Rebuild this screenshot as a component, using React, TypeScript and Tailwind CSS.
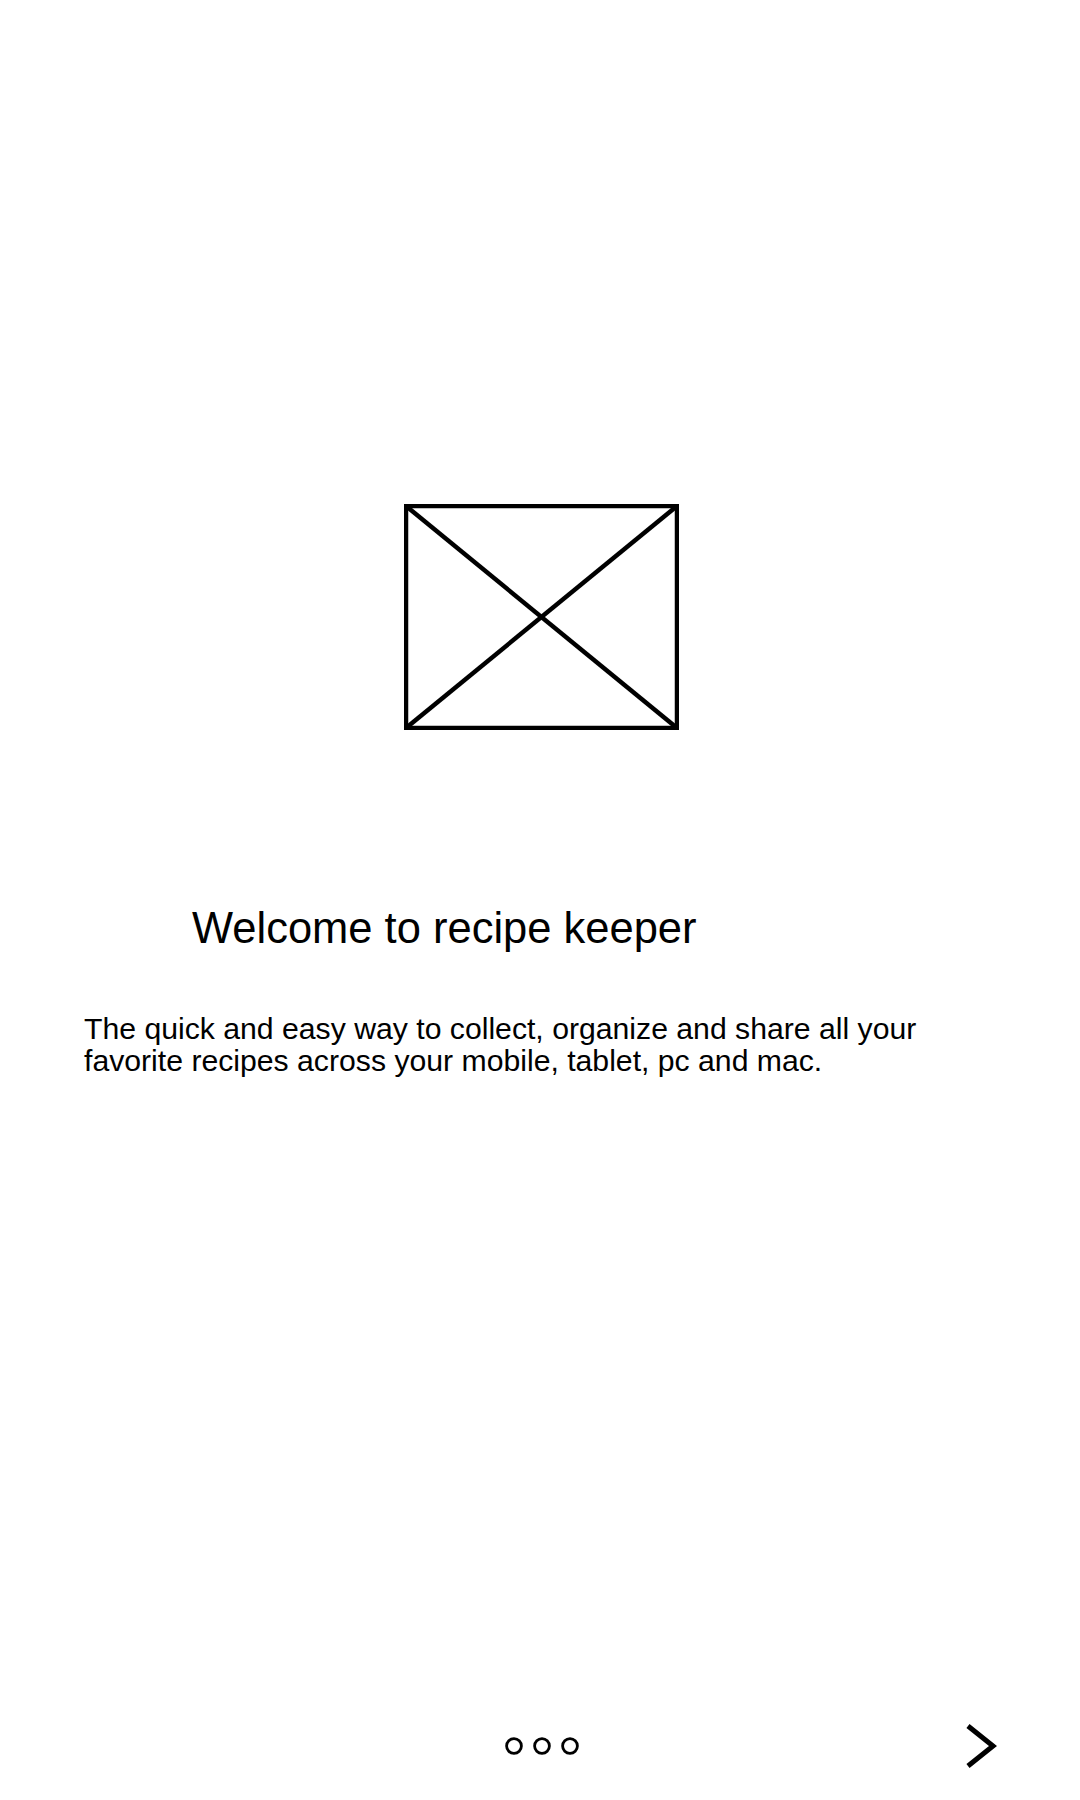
import React from 'react';

function Placeholder() {
  return (
    <svg width="275" height="226" viewBox="0 0 275 226" className="block">
      <rect x="2" y="2" width="271" height="222" fill="none" stroke="black" strokeWidth="4.5" />
      <line x1="2" y1="2" x2="273" y2="224" stroke="black" strokeWidth="4.5" />
      <line x1="273" y1="2" x2="2" y2="224" stroke="black" strokeWidth="4.5" />
    </svg>
  );
}

function Dot() {
  return (
    <svg width="18" height="18" viewBox="0 0 18 18" className="block">
      <circle cx="9" cy="9" r="7.4" fill="none" stroke="black" strokeWidth="2.8" />
    </svg>
  );
}

export default function App() {
  return (
    <div className="w-[1080px] h-[1800px] bg-white text-black flex flex-col font-['Liberation_Sans',Arial,sans-serif]">
      <div className="pt-[504px] flex justify-center pl-[3px]">
        <Placeholder />
      </div>

      <h1 className="mt-[177px] pl-[192px] text-[43.5px] leading-[43px] font-normal">
        Welcome to recipe keeper
      </h1>

      <p className="mt-[63px] pl-[84px] pr-[100px] text-[30.2px] leading-[32px]">
        The quick and easy way to collect, organize and share all your
        <br />
        favorite recipes across your mobile, tablet, pc and mac.
      </p>

      <div className="flex-1" />

      <div className="grid grid-cols-[1fr_auto_1fr] items-center h-[44px] mb-[32px]">
        <div />
        <div className="flex items-center gap-[10px] pl-[3px]">
          <Dot />
          <Dot />
          <Dot />
        </div>
        <div className="flex justify-end pr-[83px]">
          <svg width="32" height="44" viewBox="0 0 32 44" className="block">
            <polyline points="3,2 28,22 3,42" fill="none" stroke="black" strokeWidth="5" strokeLinejoin="miter" />
          </svg>
        </div>
      </div>
    </div>
  );
}
